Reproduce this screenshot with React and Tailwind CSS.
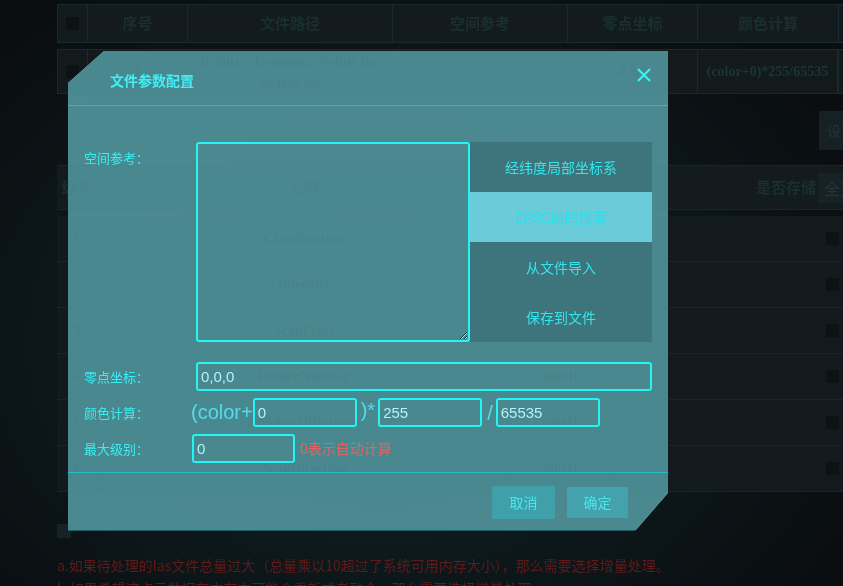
import React from "react";

const fileCols = "grid grid-cols-[30px_100px_205px_175px_130px_141px_60px]";
const fieldCols = "grid grid-cols-[40px_415px_100px_206px_60px]";

const fields = [
  { id: 1, name: "Classification", type: "uint8" },
  { id: 2, name: "Intensity", type: "uint16" },
  { id: 3, name: "ScanFlags", type: "uint8" },
  { id: 4, name: "ReturnNumber", type: "uint16" },
  { id: 5, name: "NumberOfReturns", type: "uint16" },
  { id: 6, name: "ScanDirection", type: "uint16" },
];

const refButtons = [
  { label: "经纬度局部坐标系", active: false },
  { label: "EPSG编码搜索", active: true },
  { label: "从文件导入", active: false },
  { label: "保存到文件", active: false },
];

function Check() {
  return <span className="block h-[13px] w-[13px] bg-[#0d1315]" />;
}

function Field({ className = "", value }) {
  return (
    <input
      defaultValue={value}
      className={`h-[29px] rounded-[3px] border-2 border-[#25f4f6] bg-transparent px-[3px] font-['Liberation_Sans',sans-serif] text-[15px] text-[#b0f3f6] outline-none ${className}`}
    />
  );
}

function Label({ className = "", children }) {
  return <div className={`shrink-0 text-[13px] leading-[18px] text-[#37eef2] ${className}`}>{children}</div>;
}

function ConfigModal() {
  return (
    <div className="absolute left-[68px] top-[51px] flex h-[480px] w-[600px] flex-col bg-[#21717a]/80 backdrop-invert [clip-path:polygon(36px_0,100%_0,100%_calc(100%_-_38px),calc(100%_-_33px)_100%,0_100%,0_32px)]">
      {/* header */}
      <div className="flex h-[55px] shrink-0 items-center justify-between border-b border-[#12c3cb] pl-[42px] pr-[17px]">
        <p className="mt-[3px] text-[14px] font-bold leading-none text-[#3ff0f5]">文件参数配置</p>
        <svg className="mb-[6px]" width="14" height="14" viewBox="0 0 14 14">
          <path d="M1 1 L13 13 M13 1 L1 13" stroke="#3af5f5" strokeWidth="2" />
        </svg>
      </div>

      <div className="px-[16px] pt-[36px]">
        {/* 空间参考 */}
        <div className="flex">
          <Label className="w-[112px] pt-[7px]">空间参考：</Label>
          <textarea className="h-[200px] w-[274px] rounded-[3px] border-2 border-[#25f4f6] bg-transparent outline-none" />
          <div className="flex w-[182px] flex-col">
            {refButtons.map((b) => (
              <div
                key={b.label}
                className={`flex h-[50px] items-center justify-center text-[14px] ${
                  b.active ? "bg-[#6ccbd9] text-[#26e0ec]" : "bg-[#3e747b]/95 text-[#34e6ec]"
                }`}
              >
                {b.label}
              </div>
            ))}
          </div>
        </div>

        {/* 零点坐标 */}
        <div className="mt-[20px] flex items-center">
          <Label className="w-[112px]">零点坐标：</Label>
          <Field className="w-[456px]" value="0,0,0" />
        </div>

        {/* 颜色计算 */}
        <div className="mt-[7px] flex items-center font-['Liberation_Sans',sans-serif]">
          <Label className="w-[107px] font-['Noto_Sans_CJK_SC',sans-serif]">颜色计算：</Label>
          <span className="mb-[2px] text-[20px] leading-none text-[#52dcee]">(color+</span>
          <Field className="w-[104px]" value="0" />
          <span className="mb-[6px] ml-[4px] mr-[3px] text-[20px] leading-none text-[#52dcee]">)*</span>
          <Field className="w-[104px]" value="255" />
          <span className="ml-[5px] mr-[3px] text-[20px] leading-none text-[#52dcee]">/</span>
          <Field className="w-[104px]" value="65535" />
        </div>

        {/* 最大级别 */}
        <div className="mt-[7px] flex items-center">
          <Label className="w-[108px]">最大级别：</Label>
          <Field className="w-[103px]" value="0" />
          <span className="ml-[5px] text-[14px] text-[#e2645f]">0表示自动计算</span>
        </div>
      </div>

      <div className="mt-[9px] h-px bg-[#21bfc6]" />

      <div className="flex justify-end gap-[12px] pr-[40px] pt-[13px]">
        <button className="h-[33px] w-[63px] bg-[#40a0aa] text-[14px] text-[#4ae6ee]">取消</button>
        <button className="mt-[1px] h-[31px] w-[61px] bg-[#43a2ac] text-[14px] text-[#4ae6ee]">确定</button>
      </div>
    </div>
  );
}

export default function App() {
  return (
    <div className="relative h-[586px] w-[843px] overflow-hidden bg-[#0a0e10] bg-[radial-gradient(ellipse_62%_70%_at_45%_58%,#10242a_0%,#0d181b_55%,#0a0e10_100%)] font-['Noto_Sans_CJK_SC',sans-serif]">
      <div className="pl-[57px] pt-[4px]">
        {/* file table */}
        <div className="w-[841px]">
          <div className={`${fileCols} h-[39px] border border-[#172a2e] bg-[#131b1e] text-[15px] font-bold text-[#19302f]`}>
            <div className="flex items-center justify-center border-r border-[#172a2e]">
              <Check />
            </div>
            <div className="flex items-center justify-center border-r border-[#172a2e]">序号</div>
            <div className="flex items-center justify-center border-r border-[#172a2e]">文件路径</div>
            <div className="flex items-center justify-center border-r border-[#172a2e]">空间参考</div>
            <div className="flex items-center justify-center border-r border-[#172a2e]">零点坐标</div>
            <div className="flex items-center justify-center border-r border-[#172a2e]">颜色计算</div>
            <div />
          </div>
          <div className={`${fileCols} mt-[6px] h-[45px] border border-[#172a2e] bg-[#121a1c] font-['Liberation_Serif',serif] text-[14px] font-bold text-[#1c3538]`}>
            <div className="flex items-center justify-center border-r border-[#172a2e]">
              <Check />
            </div>
            <div className="flex items-center justify-center border-r border-[#172a2e]">1</div>
            <div className="flex items-center justify-center border-r border-[#172a2e] px-[8px] text-center leading-[21px]">
              D:\liuzy\documents\PointClou
              <br />
              ds\tree.las
            </div>
            <div className="border-r border-[#172a2e]" />
            <div className="flex items-center justify-center border-r border-[#172a2e]">0,0,0</div>
            <div className="flex items-center justify-center border-r-2 border-[#172a2e]">(color+0)*255/65535</div>
            <div />
          </div>
        </div>

        <div className="ml-[762px] mt-[17px] flex h-[39px] w-[60px] items-center bg-[#172125] pl-[8px] text-[14px] text-[#223437]">
          设置
        </div>

        {/* field table */}
        <div className="mt-[15px] w-[841px]">
          <div className={`${fieldCols} h-[45px] border-y border-[#14272b] bg-[#131b1e] text-[15px] font-bold text-[#19302f]`}>
            <div className="flex items-center justify-center border-r border-[#14272b]">编号</div>
            <div className="flex items-center justify-center border-r border-[#14272b]">名称</div>
            <div className="flex items-center justify-center">字段类型</div>
            <div className="flex items-center justify-end pr-[2px]">是否存储</div>
            <div className="flex items-center">
              <span className="flex h-[30px] w-[40px] items-center bg-[#172225] pl-[6px] text-[16px] font-normal text-[#223538]">全选</span>
            </div>
          </div>
          <div className="mt-[6px]">
            {fields.map((f) => (
              <div
                key={f.id}
                className={`${fieldCols} h-[46px] border-b border-[#0f2a2f] bg-[#121a1d] font-['Liberation_Serif',serif] text-[14px] font-bold text-[#1c3538]`}
              >
                <div className="flex items-center justify-center border-r border-[#14272b]">{f.id}</div>
                <div className="flex items-center justify-center border-r border-[#14272b]">{f.name}</div>
                <div className="flex items-center justify-center border-r border-[#14272b]">{f.type}</div>
                <div />
                <div className="flex items-center pl-[8px]">
                  <Check />
                </div>
              </div>
            ))}
          </div>
        </div>

        <div className="mt-[32px] h-[14px] w-[14px] bg-[#152326]" />
        <div className="mt-[16px] text-[14px] leading-[23px] text-[#5e1b1b]">
          <p>a.如果待处理的las文件总量过大（总量乘以10超过了系统可用内存大小），那么需要选择增量处理。</p>
          <p>b.如果希望这点云数据在内存中可能会重新或者融合，那么需要选择增量处理。</p>
        </div>
      </div>

      <ConfigModal />
    </div>
  );
}
